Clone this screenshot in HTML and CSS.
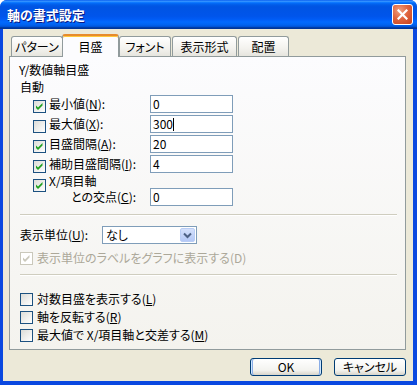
FILE: index.html
```html
<!DOCTYPE html>
<html lang="ja">
<head>
  <meta charset="UTF-8" />
  <title>軸の書式設定</title>
  <link rel="stylesheet" href="styles.css">
</head>
<body>
  <div class="window">
    <div class="titlebar">
      <span class="title">軸の書式設定</span>
      <span class="close">
        <svg width="11" height="11" viewBox="0 0 11 11"><path d="M1.5 1.5 L9.5 9.5 M9.5 1.5 L1.5 9.5" stroke="#fff" stroke-width="2.2" stroke-linecap="square"/></svg>
      </span>
    </div>

    <div class="client">
      <div class="tabs">
        <div class="tab t-pattern">パターン</div>
        <div class="tab selected">目盛</div>
        <div class="tab t-font">フォント</div>
        <div class="tab t-format">表示形式</div>
        <div class="tab t-align">配置</div>
      </div>

      <div class="panel">
        <div class="heading">Y/数値軸目盛</div>
        <div class="auto">自動</div>

        <div class="field">
          <span class="check on"><svg width="11" height="11" viewBox="0 0 11 11"><path d="M2 4.5 L4 6.5 L8.5 2 L8.5 4.5 L4 9 L2 7 Z" fill="#21A121"/></svg></span>
          <span class="field-label">最小値(<u>N</u>):</span>
          <div class="textbox">0</div>
        </div>
        <div class="field">
          <span class="check"></span>
          <span class="field-label">最大値(<u>X</u>):</span>
          <div class="textbox">300<span class="caret"></span></div>
        </div>
        <div class="field">
          <span class="check on"><svg width="11" height="11" viewBox="0 0 11 11"><path d="M2 4.5 L4 6.5 L8.5 2 L8.5 4.5 L4 9 L2 7 Z" fill="#21A121"/></svg></span>
          <span class="field-label">目盛間隔(<u>A</u>):</span>
          <div class="textbox">20</div>
        </div>
        <div class="field">
          <span class="check on"><svg width="11" height="11" viewBox="0 0 11 11"><path d="M2 4.5 L4 6.5 L8.5 2 L8.5 4.5 L4 9 L2 7 Z" fill="#21A121"/></svg></span>
          <span class="field-label">補助目盛間隔(<u>I</u>):</span>
          <div class="textbox">4</div>
        </div>
        <div class="cross-row">
          <span class="check on"><svg width="11" height="11" viewBox="0 0 11 11"><path d="M2 4.5 L4 6.5 L8.5 2 L8.5 4.5 L4 9 L2 7 Z" fill="#21A121"/></svg></span>
          <span>X/項目軸</span>
        </div>
        <div class="field cross-field">
          <span class="field-label">との交点(<u>C</u>):</span>
          <div class="textbox">0</div>
        </div>

        <div class="sep"></div>

        <div class="unit-row">
          <span class="unit-label">表示単位(<u>U</u>):</span>
          <div class="select">
            <span class="value">なし</span>
            <span class="arrow"><svg width="9" height="7" viewBox="0 0 9 7"><path d="M1 1.5 L4.5 5 L8 1.5" fill="none" stroke="#4D6185" stroke-width="2"/></svg></span>
          </div>
        </div>
        <div class="disabled-row">
          <span class="check off"><svg width="11" height="11" viewBox="0 0 11 11"><path d="M2 4.5 L4 6.5 L8.5 2 L8.5 4.5 L4 9 L2 7 Z" fill="#CAC8BB"/></svg></span>
          <span>表示単位のラベルをグラフに表示する(D)</span>
        </div>

        <div class="sep sep-low"></div>

        <div class="opt-row first">
          <span class="check"></span>
          <span>対数目盛を表示する(<u>L</u>)</span>
        </div>
        <div class="opt-row">
          <span class="check"></span>
          <span>軸を反転する(<u>R</u>)</span>
        </div>
        <div class="opt-row">
          <span class="check"></span>
          <span>最大値で X/項目軸と交差する(<u>M</u>)</span>
        </div>
      </div>

      <div class="buttons">
        <div class="btn default">OK</div>
        <div class="btn">キャンセル</div>
      </div>
    </div>
  </div>
</body>
</html>
```

FILE: styles.css
```css
/* Base */
html, body {
  margin: 0;
  padding: 0;
  background: #ffffff;
}
body {
  font-family: "Noto Sans CJK JP", "DejaVu Sans", sans-serif;
  font-size: 12px;
  font-feature-settings: "palt";
  color: #000;
}
u {
  text-decoration: underline;
  text-underline-offset: 1px;
}

/* Window frame */
.window {
  width: 417px;
  height: 385px;
  display: flex;
  flex-direction: column;
  background: #0A48E0;
  border-radius: 7px 7px 0 0;
  overflow: hidden;
}

.titlebar {
  height: 29px;
  flex: none;
  display: flex;
  align-items: center;
  padding: 0 4px 0 7px;
  background: linear-gradient(to bottom,
    #0058EE 0%, #3A93FF 4%, #288EFF 6%, #127DFF 8%, #036FFC 10%,
    #0262EE 14%, #0057E5 20%, #0054E3 24%, #0055EB 56%, #005BF5 66%,
    #026AFE 76%, #0062EF 86%, #0052D6 92%, #0040AB 94%, #003092 100%);
}
.title {
  flex: 1;
  color: #fff;
  font-weight: bold;
  font-size: 13px;
  line-height: 15px;
  text-shadow: 1px 1px 0 #0A1883;
}
.close {
  width: 21px;
  height: 21px;
  box-sizing: border-box;
  border: 1px solid #fff;
  border-radius: 3px;
  background: radial-gradient(circle at 35% 30%, #F0A080 0%, #E06640 45%, #C6401C 100%);
  display: flex;
  align-items: center;
  justify-content: center;
}

/* Client area */
.client {
  flex: 1;
  margin: 0 4px 4px 3px;
  background: #ECE9D8;
  display: flex;
  flex-direction: column;
}

/* Tabs */
.tabs {
  display: flex;
  align-items: flex-end;
  height: 23px;
  padding: 5px 0 0 8px;
  margin-bottom: -1px;
  position: relative;
  z-index: 1;
}
.tab {
  height: 20px;
  box-sizing: border-box;
  border: 1px solid #919B9C;
  border-bottom: none;
  border-radius: 3px 3px 0 0;
  background: linear-gradient(#FFFFFF, #F3F2EE 60%, #E6E5DE);
  text-align: center;
  line-height: 19px;
  margin-bottom: 1px;
}
.t-pattern { width: 52px; }
.t-font { width: 52px; margin-right: 1px; }
.t-format { width: 65px; margin-right: 1px; }
.t-align { width: 51px; }
.tab.selected {
  width: 57px;
  height: 23px;
  margin: 0 0 0 -1px;
  background: #FCFCFE;
  border-top: 2px solid #E68B2C;
  box-shadow: inset 0 1px 0 #FFC83C;
  line-height: 21px;
}

/* Panel */
.panel {
  margin-left: 6px;
  width: 397px;
  height: 294px;
  box-sizing: border-box;
  border: 1px solid #919B9C;
  background: linear-gradient(#FCFCFE, #F4F3EE);
  padding: 6px 8px 0 10px;
  line-height: 14px;
}
.heading {
  margin-left: -1px;
}
.auto {
  margin-top: 3px;
}

/* Checkboxes */
.check {
  flex: none;
  width: 13px;
  height: 13px;
  box-sizing: border-box;
  border: 1px solid #1C5180;
  background: linear-gradient(135deg, #DCDCD7, #FFFFFF);
  display: flex;
  align-items: center;
  justify-content: center;
}
.check.off {
  border-color: #CAC8BB;
  background: #FFFFFF;
}

/* Value rows */
.field {
  display: flex;
  align-items: center;
  height: 20px;
  padding-left: 13px;
}
.field .check {
  margin: 4px 3px 0 0;
}
.field-label {
  width: 101px;
}
.cross-field {
  height: 18px;
  padding-left: 51px;
}
.cross-field .field-label {
  width: 79px;
}
.cross-row {
  display: flex;
  align-items: flex-start;
  height: 14px;
  padding-left: 13px;
}
.cross-row .check {
  margin: 5px 3px 0 0;
}
.textbox {
  width: 83px;
  height: 18px;
  box-sizing: border-box;
  border: 1px solid #7F9DB9;
  background: #fff;
  padding-left: 2px;
  line-height: 16px;
  display: flex;
  align-items: center;
}
.caret {
  width: 1px;
  height: 13px;
  background: #000;
}

/* Separators */
.sep {
  margin-top: 8px;
  border-top: 1px solid #CFCDBF;
  border-bottom: 1px solid #FFFFFF;
}
.sep-low {
  margin-top: 9px;
}

/* Display unit */
.unit-row {
  display: flex;
  align-items: center;
  height: 18px;
  margin-top: 10px;
}
.unit-label {
  width: 82px;
}
.select {
  width: 95px;
  height: 18px;
  box-sizing: border-box;
  border: 1px solid #7F9DB9;
  background: #fff;
  display: flex;
  align-items: center;
  padding: 0 1px 0 3px;
}
.select .value {
  flex: 1;
}
.select .arrow {
  width: 15px;
  height: 14px;
  box-sizing: border-box;
  border: 1px solid #B9CDF5;
  border-radius: 2px;
  background: linear-gradient(#D4E0FB, #B4C8F6);
  display: flex;
  align-items: center;
  justify-content: center;
}
.disabled-row {
  display: flex;
  align-items: center;
  height: 14px;
  margin-top: 7px;
  color: #ACA899;
}
.disabled-row .check {
  margin-right: 4px;
}

/* Options */
.opt-row {
  display: flex;
  align-items: center;
  height: 18px;
}
.opt-row.first {
  margin-top: 14px;
}
.opt-row .check {
  margin-right: 4px;
}

/* Dialog buttons */
.buttons {
  display: flex;
  justify-content: flex-end;
  gap: 12px;
  padding: 8px 7px 0 0;
}
.btn {
  width: 72px;
  height: 18px;
  box-sizing: border-box;
  border: 1px solid #003C74;
  border-radius: 3px;
  background: linear-gradient(#FFFFFF, #F3F3EF 70%, #D8D4CA);
  text-align: center;
  line-height: 16px;
}
.btn.default {
  box-shadow: inset 1px 0 0 #CEE7FF, inset -1px 0 0 #CEE7FF, inset 2px 0 0 #8AADE6, inset -2px 0 0 #8AADE6;
}
```
